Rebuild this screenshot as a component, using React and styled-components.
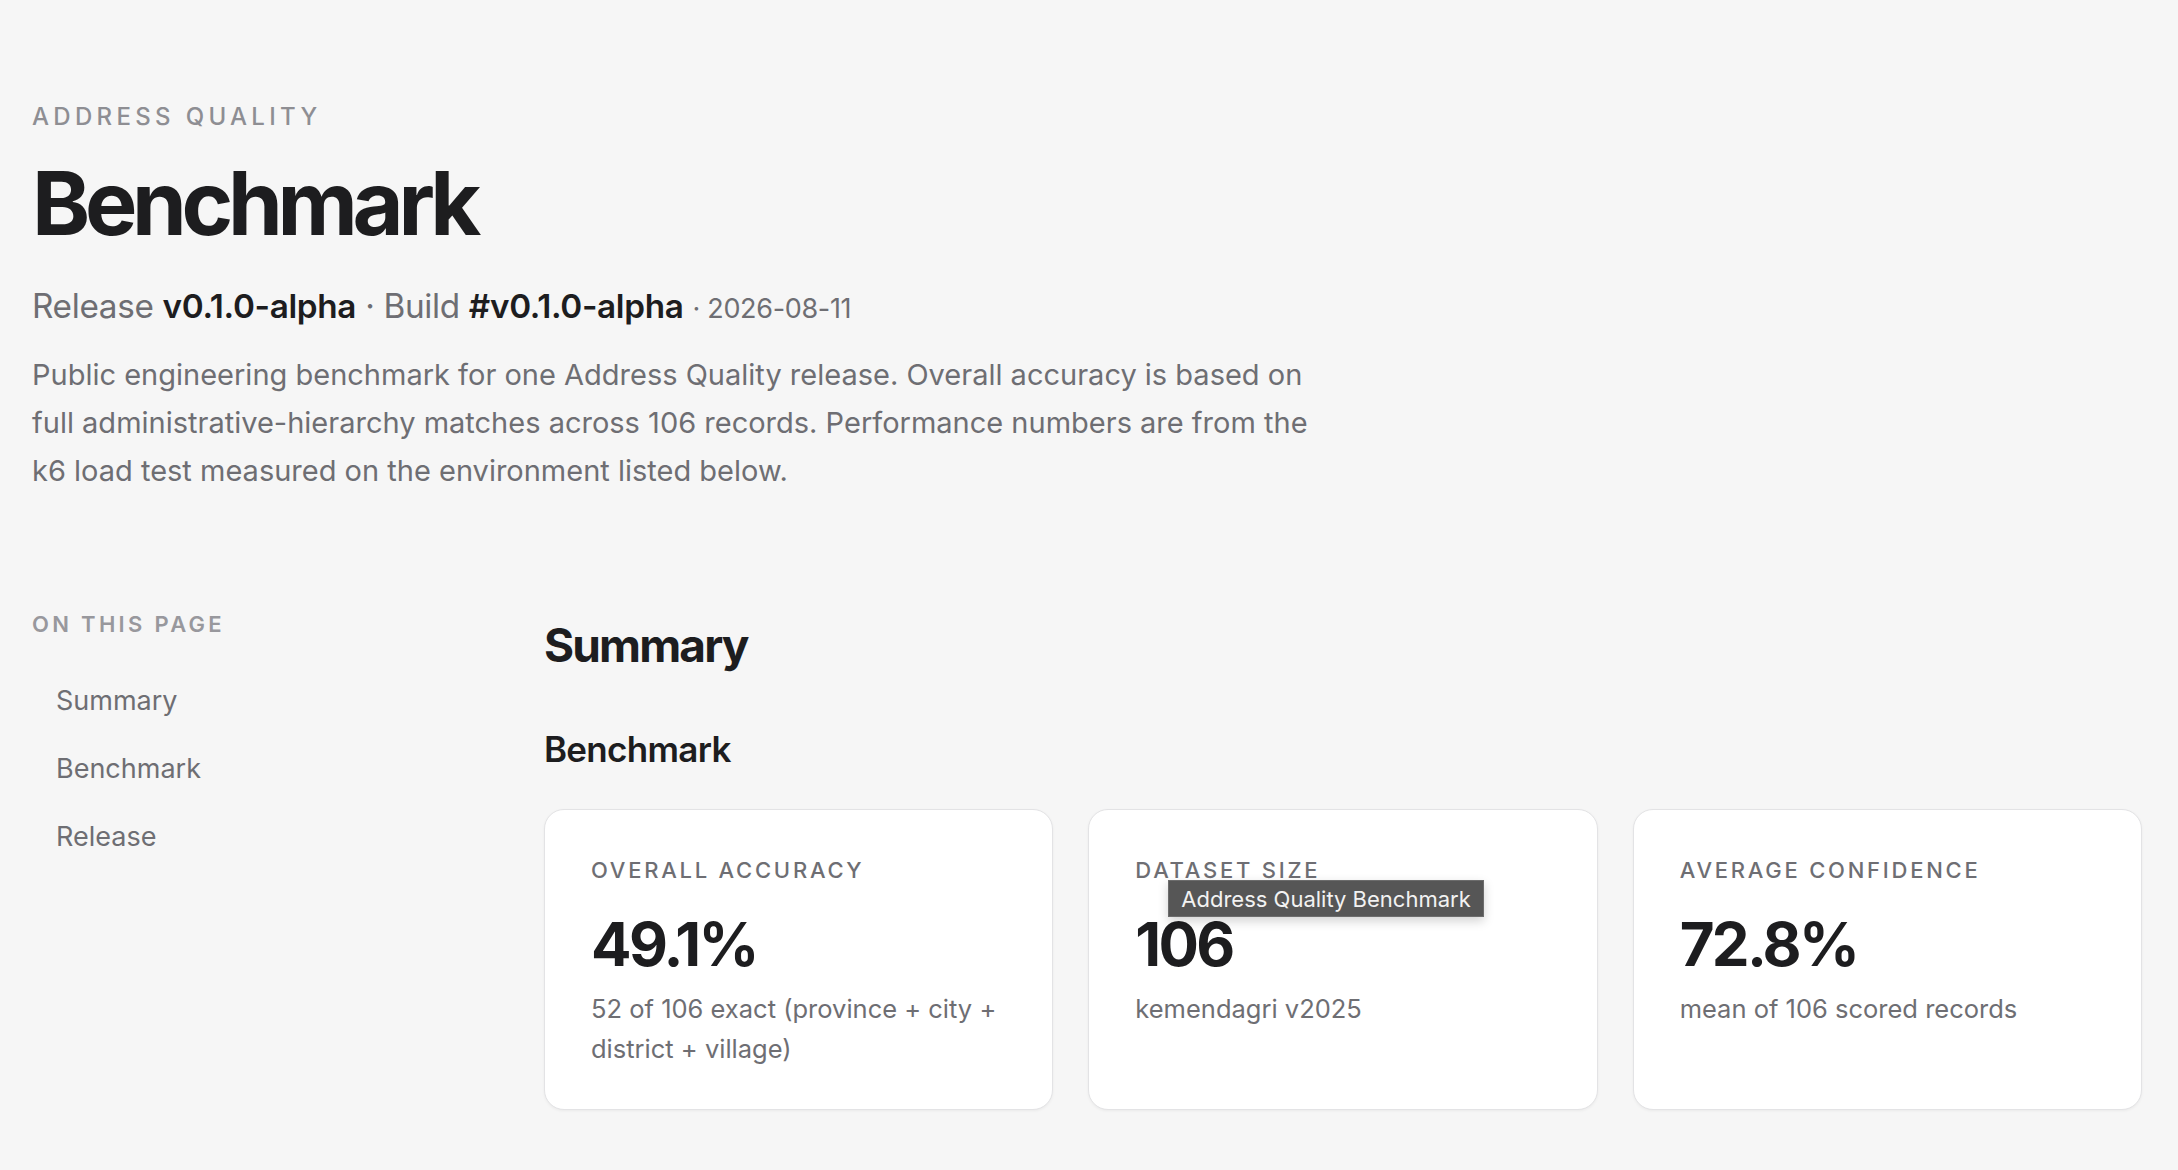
import React from 'react';
import styled, { createGlobalStyle } from 'styled-components';

const GlobalStyle = createGlobalStyle`
  html, body {
    margin: 0;
    padding: 0;
    background: #f6f6f6;
  }
  body {
    font-family: Inter, "Noto Sans", "Liberation Sans", sans-serif;
    color: #1d1d1f;
  }
  * {
    box-sizing: border-box;
  }
`;

const Page = styled.div`
  min-height: 1170px;
  padding: 101px 36px 60px 32px;
`;

const Header = styled.header`
  display: flex;
  flex-direction: column;
`;

const Eyebrow = styled.div`
  font-size: 24px;
  line-height: 32px;
  font-weight: 500;
  letter-spacing: 0.18em;
  color: #8e8e93;
  text-transform: uppercase;
`;

const Title = styled.h1`
  margin: 20px 0 0;
  font-size: 88px;
  line-height: 100px;
  font-weight: 700;
  letter-spacing: -0.06em;
  color: #1d1d1f;
`;

const Meta = styled.div`
  margin-top: 35px;
  font-size: 33.3px;
  line-height: 36px;
  color: #6e6e73;
  letter-spacing: -0.01em;
`;

const Strong = styled.strong`
  font-weight: 600;
  color: #1d1d1f;
`;

const MetaDate = styled.span`
  font-size: 27px;
  color: #6e6e73;
`;

const Intro = styled.p`
  margin: 24px 0 0;
  max-width: 1340px;
  font-size: 29px;
  line-height: 48px;
  color: #6e6e73;
`;

const Layout = styled.div`
  display: grid;
  grid-template-columns: 512px 1fr;
  align-items: start;
  margin-top: 114px;
`;

const Sidebar = styled.nav`
  display: flex;
  flex-direction: column;
`;

const SidebarTitle = styled.div`
  font-size: 22px;
  line-height: 30px;
  font-weight: 600;
  letter-spacing: 0.15em;
  color: #98989d;
  text-transform: uppercase;
  margin-bottom: 27px;
`;

const NavItem = styled.a`
  display: flex;
  align-items: center;
  height: 68px;
  padding-left: 24px;
  font-size: 27px;
  color: #6e6e73;
  text-decoration: none;
`;

const Main = styled.main`
  padding-top: 9px;
  display: flex;
  flex-direction: column;
`;

const SectionTitle = styled.h2`
  margin: 0;
  font-size: 46px;
  line-height: 55px;
  font-weight: 700;
  letter-spacing: -0.04em;
  color: #1d1d1f;
`;

const SubTitle = styled.h3`
  margin: 54px 0 0;
  font-size: 35px;
  line-height: 44px;
  font-weight: 600;
  letter-spacing: -0.02em;
  color: #1d1d1f;
`;

const Cards = styled.div`
  margin-top: 38px;
  display: grid;
  grid-template-columns: repeat(3, 1fr);
  gap: 35px;
`;

const Card = styled.div`
  position: relative;
  background: #ffffff;
  border: 1px solid #e3e3e5;
  border-radius: 20px;
  box-shadow: 0 1px 3px rgba(0, 0, 0, 0.05);
  padding: 45px 46px 40px;
`;

const CardLabel = styled.div`
  font-size: 22px;
  line-height: 30px;
  font-weight: 500;
  letter-spacing: 0.125em;
  color: #6e6e73;
  text-transform: uppercase;
`;

const CardValue = styled.div`
  margin-top: 26px;
  font-size: 60px;
  line-height: 66px;
  font-weight: 700;
  letter-spacing: -0.045em;
  color: #1d1d1f;
`;

const CardNote = styled.div`
  margin-top: 12px;
  font-size: 25.5px;
  line-height: 40px;
  color: #6e6e73;
`;

const Tooltip = styled.div`
  position: absolute;
  left: 79px;
  top: 70px;
  padding: 0 12px;
  height: 37px;
  display: flex;
  align-items: center;
  white-space: nowrap;
  background: #565656;
  border: 1px solid #6c6c6c;
  box-shadow: 0 4px 10px rgba(0, 0, 0, 0.18);
  color: #f2f2f2;
  font-size: 22px;
`;

const stats = [
  {
    label: 'Overall accuracy',
    value: '49.1%',
    note: '52 of 106 exact (province + city + district + village)',
  },
  {
    label: 'Dataset size',
    value: '106',
    note: 'kemendagri v2025',
    tooltip: 'Address Quality Benchmark',
  },
  {
    label: 'Average confidence',
    value: '72.8%',
    note: 'mean of 106 scored records',
  },
];

export default function App() {
  return (
    <>
      <GlobalStyle />
      <Page>
        <Header>
          <Eyebrow>Address Quality</Eyebrow>
          <Title>Benchmark</Title>
          <Meta>
            Release <Strong>v0.1.0-alpha</Strong> · Build <Strong>#v0.1.0-alpha</Strong>{' '}
            <MetaDate>· 2026-08-11</MetaDate>
          </Meta>
          <Intro>
            Public engineering benchmark for one Address Quality release. Overall accuracy is based on
            <br />
            full administrative-hierarchy matches across 106 records. Performance numbers are from the
            <br />
            k6 load test measured on the environment listed below.
          </Intro>
        </Header>

        <Layout>
          <Sidebar>
            <SidebarTitle>On this page</SidebarTitle>
            <NavItem href="#summary">Summary</NavItem>
            <NavItem href="#benchmark">Benchmark</NavItem>
            <NavItem href="#release">Release</NavItem>
          </Sidebar>

          <Main>
            <SectionTitle id="summary">Summary</SectionTitle>
            <SubTitle id="benchmark">Benchmark</SubTitle>
            <Cards>
              {stats.map((s) => (
                <Card key={s.label}>
                  <CardLabel>{s.label}</CardLabel>
                  <CardValue>{s.value}</CardValue>
                  <CardNote>{s.note}</CardNote>
                  {s.tooltip && <Tooltip>{s.tooltip}</Tooltip>}
                </Card>
              ))}
            </Cards>
          </Main>
        </Layout>
      </Page>
    </>
  );
}
